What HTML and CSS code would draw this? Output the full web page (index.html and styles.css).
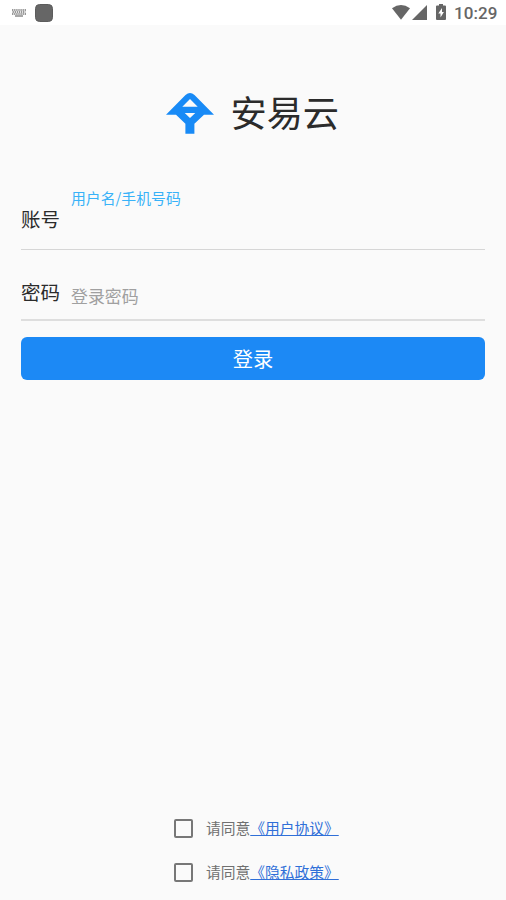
FILE: index.html
```html
<!DOCTYPE html>
<html lang="zh-CN">
<head>
<meta charset="utf-8">
<title>安易云</title>
<link rel="stylesheet" href="styles.css">
</head>
<body>
<header class="status">
  <svg class="keyboard" width="14" height="8" viewBox="0 0 14 8"><path d="M0 1h14M.5 3h13M0 5h14" stroke="#777" stroke-width="1.3" stroke-dasharray="1.4 .7"/><path d="M3 7h8" stroke="#777" stroke-width="1.3"/></svg>
  <span class="app-dot"></span>
  <svg class="wifi" width="18" height="15" viewBox="0 0 18 15"><path d="M0 3.3Q9-3.3 18 3.3L9 14.7Z" fill="#666"/></svg>
  <svg class="signal" width="15" height="15" viewBox="0 0 15 15"><path d="M15 0v15H0Z" fill="#666"/></svg>
  <svg class="battery" width="10" height="16" viewBox="0 0 10 16"><path d="M3 0h4v1.5h2q1 0 1 1V15q0 1-1 1H1q-1 0-1-1V2.500q0-1 1-1h2Z" fill="#666"/><path d="M6 4 2.300 9.500h2.200V13.500L7.900 8H6Z" fill="#fff"/></svg>
  <span class="time">10:29</span>
</header>
<main>
  <div class="brand">
    <svg width="48" height="42" viewBox="0 0 48 42"><path fill="#188af6" fill-rule="evenodd" d="M0 22.700 19.500 3Q24-1 28.500 3L48 22.700H38L28.400 31.800V41.700H19.400V31.800L10 22.700ZM24 7 16.300 14.700H31.700ZM18.700 21 24 26 29.300 21Z"/></svg>
    <h1>安易云</h1>
  </div>
  <form>
    <div class="field account"><label>账号</label><span class="floating">用户名/手机号码</span></div>
    <div class="field password"><label>密码</label><span class="hint">登录密码</span></div>
    <button type="button">登录</button>
  </form>
</main>
<footer>
  <div class="agree"><span class="box"></span><span>请同意<a>《用户协议》</a></span></div>
  <div class="agree"><span class="box"></span><span>请同意<a>《隐私政策》</a></span></div>
</footer>
</body>
</html>
```
FILE: styles.css
```css
* { box-sizing: border-box; }
body {
  margin: 0;
  height: 900px;
  display: flex;
  flex-direction: column;
  background: #fafafa;
  color: #2b2b2b;
  font-family: "Noto Sans CJK SC", sans-serif;
  overflow: hidden;
}
svg { display: block; flex: none; }
.status {
  height: 25px;
  flex: none;
  display: flex;
  align-items: center;
  padding: 0 9px 0 12px;
  background: #fff;
}
.app-dot {
  width: 18px;
  height: 18px;
  margin-left: 9.400px;
  border-radius: 4.500px;
  background: #666;
  border: 1px solid #5c5c5c;
}
.wifi { margin-left: auto; }
.signal { margin-left: 2px; }
.battery { margin: -1px 8.500px 0 8.500px; }
.time {
  width: 43px;
  font: 500 17px/25px Roboto, sans-serif;
  letter-spacing: .1px;
  color: #666;
  padding-top: 1px;
}
.brand {
  display: flex;
  justify-content: center;
  align-items: flex-start;
  height: 152px;
  padding: 67px 1px 0 0;
}
h1 {
  margin: -8px 0 0 16.500px;
  font-size: 36.200px;
  line-height: 54px;
  font-weight: 400;
}
form { padding: 0 21px; }
.field {
  display: flex;
  align-items: flex-start;
}
.account {
  height: 73px;
  border-bottom: 1px solid #d6d6d6;
}
.password {
  height: 71px;
  border-bottom: 2px solid #dedede;
}
label {
  width: 50px;
  font-size: 19.500px;
  line-height: 28px;
}
.account label { margin-top: 28px; }
.password label { margin-top: 28px; }
.floating {
  margin-top: 10px;
  font-size: 14.850px;
  line-height: 22px;
  color: #38b2f8;
}
.hint {
  margin-top: 33px;
  font-size: 16.900px;
  line-height: 25px;
  color: #a0a0a0;
}
button {
  display: block;
  width: 100%;
  height: 43px;
  margin-top: 16.400px;
  padding: 0 0 1px;
  border: 0;
  border-radius: 6px;
  background: #1c89f5;
  color: #fff;
  font: 400 20.300px/42px "Noto Sans CJK SC", sans-serif;
}
footer {
  margin: auto 0 5.500px;
  padding-left: 174px;
}
.agree {
  height: 44.300px;
  display: flex;
  align-items: center;
  gap: 13px;
  font-size: 14.750px;
  line-height: 22px;
  color: #707070;
}
.box {
  width: 19px;
  height: 19px;
  border: 2px solid #777;
  border-radius: 2px;
}
a {
  color: #2f6fd8;
  text-decoration: underline;
}
```
